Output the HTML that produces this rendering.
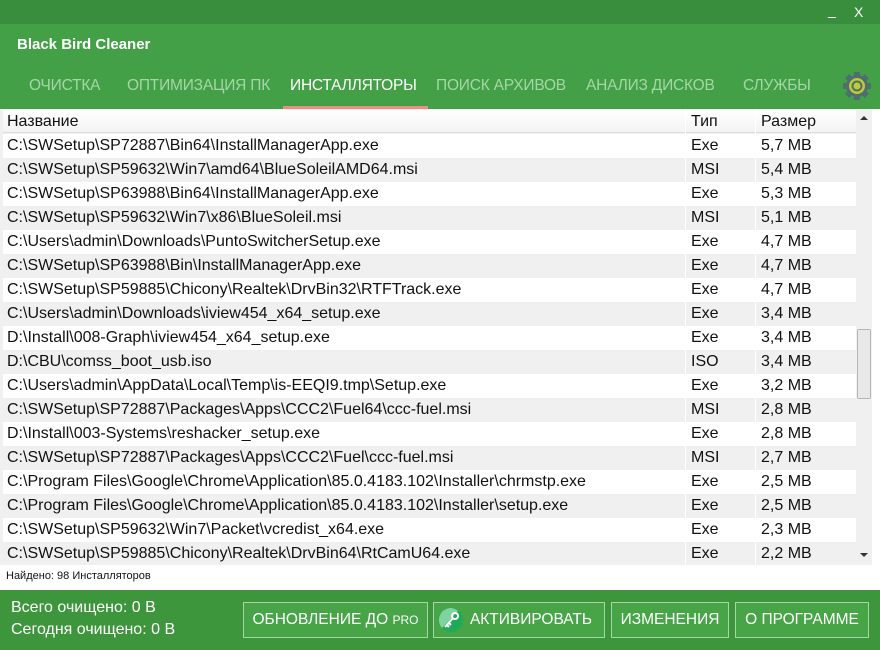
<!DOCTYPE html>
<html><head><meta charset="utf-8"><style>
*{margin:0;padding:0;box-sizing:border-box}
body{width:880px;height:650px;overflow:hidden;font-family:"Liberation Sans",Arial,sans-serif;background:#fff;position:relative}
.top{position:absolute;left:0;top:0;width:880px;height:24px;background:#388e3c}
.hdr{position:absolute;left:0;top:24px;width:880px;height:85px;background:#43a047}
.title{position:absolute;left:17px;top:36px;color:#fff;font-size:15px;font-weight:bold}
.wc{position:absolute;top:4px;color:#fff;font-size:14px}
.tab{position:absolute;top:77px;font-size:15.5px;color:#a5d6a7;letter-spacing:-0.2px}
.tab.a{color:#fff}
.ul{position:absolute;left:283px;top:106px;width:145px;height:3px;background:#f28b82}
.list{position:absolute;left:0;top:109px;width:856px;height:456px;background:#f0f0f0;overflow:hidden}
.row{position:absolute;left:3px;width:853px;height:24px;font-size:16px;color:#111;line-height:24px}
.row span{position:absolute;top:0}
.c1{left:4px}.c2{left:688px}.c3{left:758px}
.sep{position:absolute;top:0;width:1px;height:456px;background:#fff}
.sb{position:absolute;left:856px;top:109px;width:16px;height:456px;background:#f0f0f0}
.thumb{position:absolute;left:857px;top:329px;width:14px;height:70px;background:#e8e8e8;border:1px solid #b5b5b5;border-radius:2px}
.found{position:absolute;left:6px;top:570px;font-size:11px;color:#111}
.foot{position:absolute;left:0;top:590px;width:880px;height:60px;background:#3d963c}
.stat{position:absolute;left:11px;color:#fff;font-size:16px}
.btn{position:absolute;top:602px;height:36px;border:1px solid #a5d6a7;background:#47a447;color:#fff;font-size:15.5px;line-height:34px;text-align:center;white-space:nowrap}
</style></head><body>
<div class="top"></div><div class="hdr"></div>
<div class="wc" style="left:828px;top:2px">_</div><div class="wc" style="left:854px">X</div>
<div class="title">Black Bird Cleaner</div>
<div class="tab" style="left:29px">ОЧИСТКА</div>
<div class="tab" style="left:127px">ОПТИМИЗАЦИЯ ПК</div>
<div class="tab a" style="left:290px">ИНСТАЛЛЯТОРЫ</div>
<div class="tab" style="left:436px">ПОИСК АРХИВОВ</div>
<div class="tab" style="left:586px">АНАЛИЗ ДИСКОВ</div>
<div class="tab" style="left:743px">СЛУЖБЫ</div>
<svg style="position:absolute;left:841px;top:70px" width="32" height="32" viewBox="0 0 32 32"><g fill="#4f6f6f"><circle cx="16" cy="16" r="11"/><rect x="13" y="2" width="6" height="28"/><rect x="2" y="13" width="28" height="6"/><rect x="13" y="2" width="6" height="28" transform="rotate(45 16 16)"/><rect x="13" y="2" width="6" height="28" transform="rotate(-45 16 16)"/></g><circle cx="16" cy="16" r="8" fill="#c0ca33"/><circle cx="16" cy="16" r="5.5" fill="#4f6f6f"/><circle cx="16" cy="16" r="3.5" fill="#c0ca33"/></svg>
<div class="ul"></div>
<div class="list">
<div class="row" style="top:1px;background:linear-gradient(#fff,#f3f3f3);height:23px;border-bottom:1px solid #ddd"><span class="c1">Название</span><span class="c2">Тип</span><span class="c3">Размер</span></div>
<div class="sep" style="left:685px"></div><div class="sep" style="left:755px"></div>
<div class="row" style="top:25px;background:#fff"><span class="c1">C:\SWSetup\SP72887\Bin64\InstallManagerApp.exe</span><span class="c2">Exe</span><span class="c3">5,7 MB</span></div>
<div class="row" style="top:49px"><span class="c1">C:\SWSetup\SP59632\Win7\amd64\BlueSoleilAMD64.msi</span><span class="c2">MSI</span><span class="c3">5,4 MB</span></div>
<div class="row" style="top:73px;background:#fff"><span class="c1">C:\SWSetup\SP63988\Bin64\InstallManagerApp.exe</span><span class="c2">Exe</span><span class="c3">5,3 MB</span></div>
<div class="row" style="top:97px"><span class="c1">C:\SWSetup\SP59632\Win7\x86\BlueSoleil.msi</span><span class="c2">MSI</span><span class="c3">5,1 MB</span></div>
<div class="row" style="top:121px;background:#fff"><span class="c1">C:\Users\admin\Downloads\PuntoSwitcherSetup.exe</span><span class="c2">Exe</span><span class="c3">4,7 MB</span></div>
<div class="row" style="top:145px"><span class="c1">C:\SWSetup\SP63988\Bin\InstallManagerApp.exe</span><span class="c2">Exe</span><span class="c3">4,7 MB</span></div>
<div class="row" style="top:169px;background:#fff"><span class="c1">C:\SWSetup\SP59885\Chicony\Realtek\DrvBin32\RTFTrack.exe</span><span class="c2">Exe</span><span class="c3">4,7 MB</span></div>
<div class="row" style="top:193px"><span class="c1">C:\Users\admin\Downloads\iview454_x64_setup.exe</span><span class="c2">Exe</span><span class="c3">3,4 MB</span></div>
<div class="row" style="top:217px;background:#fff"><span class="c1">D:\Install\008-Graph\iview454_x64_setup.exe</span><span class="c2">Exe</span><span class="c3">3,4 MB</span></div>
<div class="row" style="top:241px"><span class="c1">D:\CBU\comss_boot_usb.iso</span><span class="c2">ISO</span><span class="c3">3,4 MB</span></div>
<div class="row" style="top:265px;background:#fff"><span class="c1">C:\Users\admin\AppData\Local\Temp\is-EEQI9.tmp\Setup.exe</span><span class="c2">Exe</span><span class="c3">3,2 MB</span></div>
<div class="row" style="top:289px"><span class="c1">C:\SWSetup\SP72887\Packages\Apps\CCC2\Fuel64\ccc-fuel.msi</span><span class="c2">MSI</span><span class="c3">2,8 MB</span></div>
<div class="row" style="top:313px;background:#fff"><span class="c1">D:\Install\003-Systems\reshacker_setup.exe</span><span class="c2">Exe</span><span class="c3">2,8 MB</span></div>
<div class="row" style="top:337px"><span class="c1">C:\SWSetup\SP72887\Packages\Apps\CCC2\Fuel\ccc-fuel.msi</span><span class="c2">MSI</span><span class="c3">2,7 MB</span></div>
<div class="row" style="top:361px;background:#fff"><span class="c1">C:\Program Files\Google\Chrome\Application\85.0.4183.102\Installer\chrmstp.exe</span><span class="c2">Exe</span><span class="c3">2,5 MB</span></div>
<div class="row" style="top:385px"><span class="c1">C:\Program Files\Google\Chrome\Application\85.0.4183.102\Installer\setup.exe</span><span class="c2">Exe</span><span class="c3">2,5 MB</span></div>
<div class="row" style="top:409px;background:#fff"><span class="c1">C:\SWSetup\SP59632\Win7\Packet\vcredist_x64.exe</span><span class="c2">Exe</span><span class="c3">2,3 MB</span></div>
<div class="row" style="top:433px"><span class="c1">C:\SWSetup\SP59885\Chicony\Realtek\DrvBin64\RtCamU64.exe</span><span class="c2">Exe</span><span class="c3">2,2 MB</span></div>
</div>
<div class="sb"></div>
<div style="position:absolute;left:860px;top:116px;width:0;height:0;border-left:4px solid transparent;border-right:4px solid transparent;border-bottom:4px solid #333"></div>
<div style="position:absolute;left:860px;top:553px;width:0;height:0;border-left:4px solid transparent;border-right:4px solid transparent;border-top:4px solid #333"></div>
<div class="thumb"></div>
<div class="found">Найдено: 98 Инсталляторов</div>
<div class="foot"></div>
<div class="stat" style="top:599px">Всего очищено: 0 B</div>
<div class="stat" style="top:621px">Сегодня очищено: 0 B</div>
<div class="btn" style="left:243px;width:185px">ОБНОВЛЕНИЕ ДО <span style="font-size:12px">PRO</span></div>
<div class="btn" style="left:433px;width:172px;padding-left:24px">АКТИВИРОВАТЬ</div>
<svg style="position:absolute;left:438px;top:607px" width="26" height="26" viewBox="0 0 26 26"><circle cx="13" cy="13" r="12" fill="#1faa59"/><path d="M13 1A12 12 0 0 0 4 21L20 4A12 12 0 0 0 13 1Z" fill="#7fd3a0"/><path d="M7 20L15 11M9 18l2 2M11 16l2 2" stroke="#fff" stroke-width="2"/><circle cx="17" cy="9" r="3" fill="none" stroke="#fff" stroke-width="2"/></svg>
<div class="btn" style="left:611px;width:118px">ИЗМЕНЕНИЯ</div>
<div class="btn" style="left:735px;width:134px">О ПРОГРАММЕ</div>
</body></html>
